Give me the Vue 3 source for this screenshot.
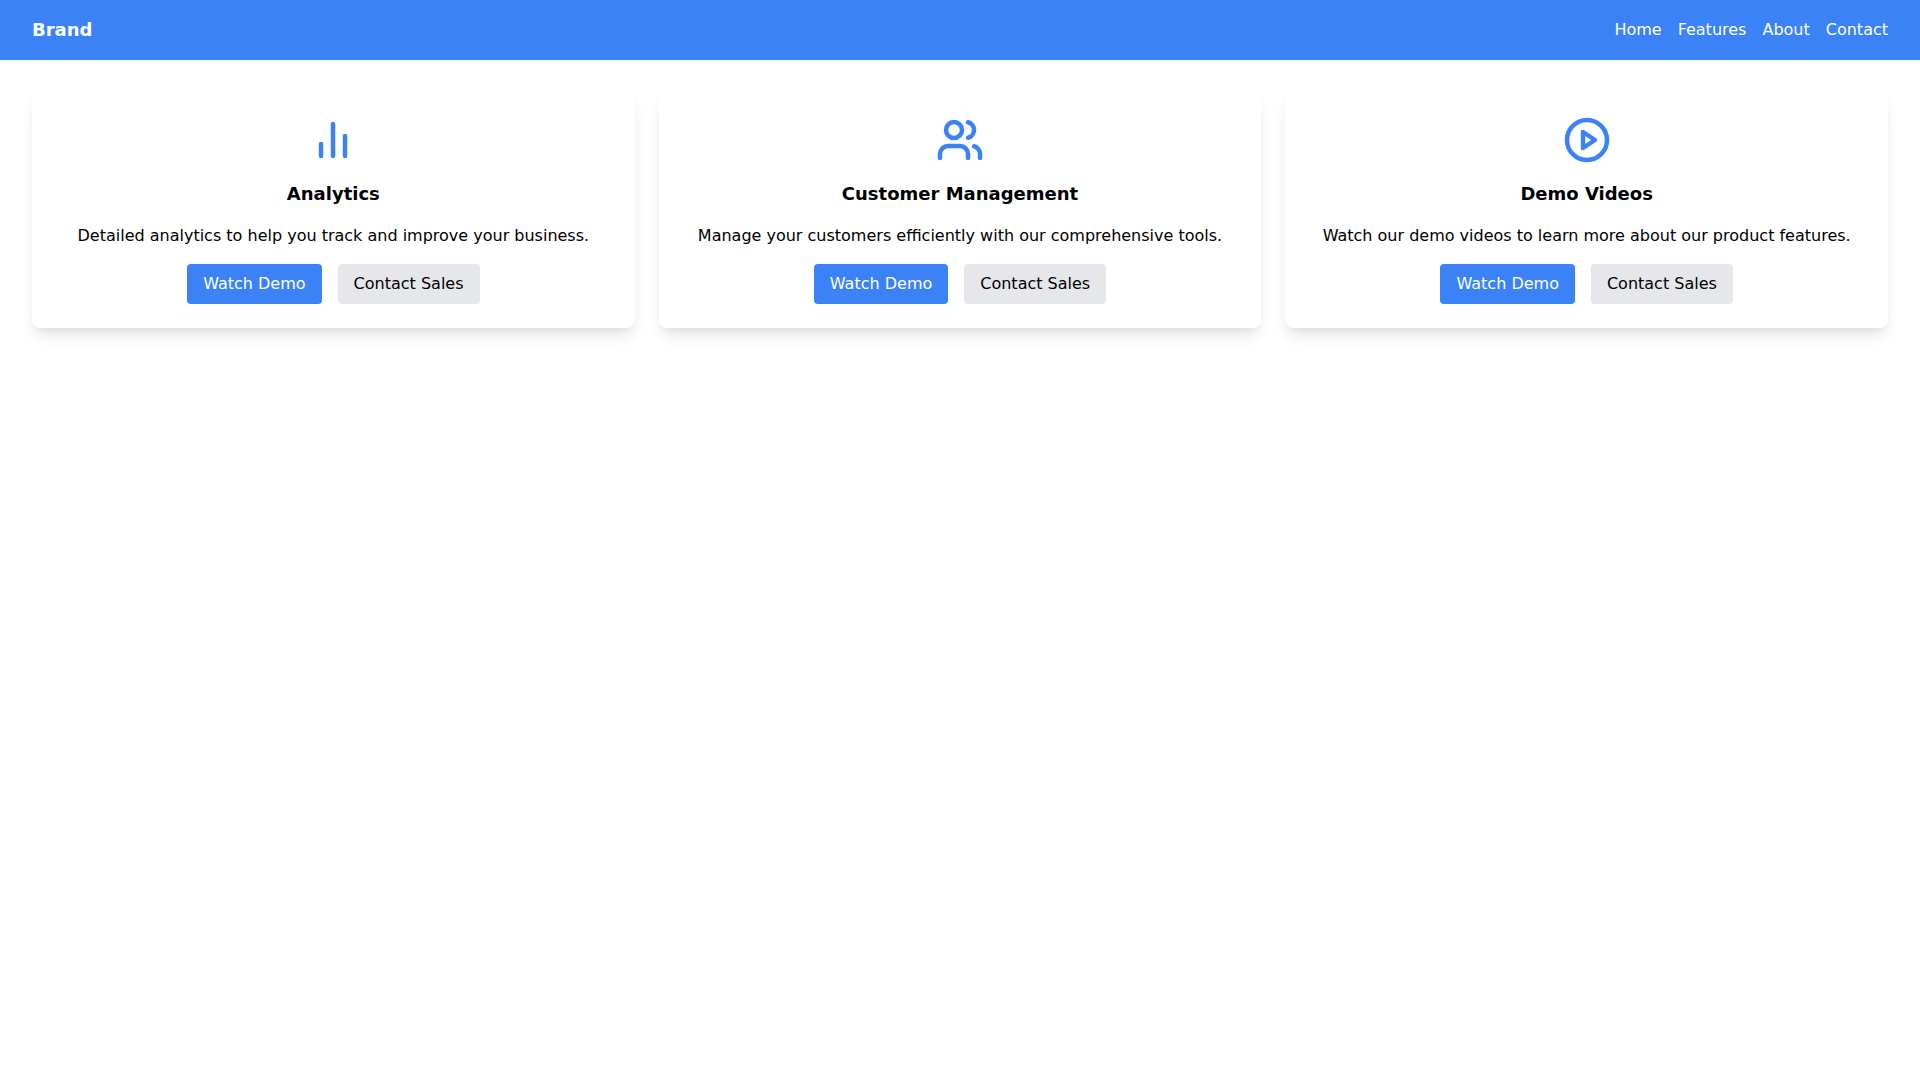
<script setup>
const cards = [
  { title: 'Analytics', text: 'Detailed analytics to help you track and improve your business.', icon: 'bars' },
  { title: 'Customer Management', text: 'Manage your customers efficiently with our comprehensive tools.', icon: 'users' },
  { title: 'Demo Videos', text: 'Watch our demo videos to learn more about our product features.', icon: 'play' }
]
const links = ['Home', 'Features', 'About', 'Contact']
</script>

<template>
  <div class="page">
    <header class="bar">
      <div class="brand">Brand</div>
      <nav class="nav">
        <a v-for="l in links" :key="l" class="link">{{ l }}</a>
      </nav>
    </header>
    <main class="grid">
      <section v-for="c in cards" :key="c.title" class="card">
        <svg class="icon" viewBox="0 0 24 24" fill="none" stroke="currentColor" stroke-width="2.25" stroke-linecap="round" stroke-linejoin="round">
          <template v-if="c.icon === 'bars'">
            <line x1="18" y1="20" x2="18" y2="10" />
            <line x1="12" y1="20" x2="12" y2="4" />
            <line x1="6" y1="20" x2="6" y2="14" />
          </template>
          <template v-else-if="c.icon === 'users'">
            <path d="M16 21v-2a4 4 0 0 0-4-4H6a4 4 0 0 0-4 4v2" />
            <circle cx="9" cy="7" r="4" />
            <path d="M22 21v-2a4 4 0 0 0-3-3.87" />
            <path d="M16 3.13a4 4 0 0 1 0 7.75" />
          </template>
          <template v-else>
            <circle cx="12" cy="12" r="10" />
            <polygon points="10 8 16 12 10 16 10 8" />
          </template>
        </svg>
        <h3 class="title">{{ c.title }}</h3>
        <p class="text">{{ c.text }}</p>
        <div class="actions">
          <button class="btn primary">Watch Demo</button>
          <button class="btn secondary">Contact Sales</button>
        </div>
      </section>
    </main>
  </div>
</template>

<style>
html, body { margin: 0; background: #fff; }
</style>

<style scoped>
.page { font-family: "DejaVu Sans", sans-serif; font-size: 16px; line-height: 24px; color: #000; min-height: 1080px; background: #fff; }
.bar { height: 60px; box-sizing: border-box; padding: 0 32px; background: #3b82f6; color: #fff; display: flex; align-items: center; justify-content: space-between; }
.brand { font-size: 18px; font-weight: 700; line-height: 28px; }
.nav { display: flex; gap: 16px; }
.link { color: #fff; }
.grid { display: grid; grid-template-columns: repeat(3, 1fr); gap: 24px; padding: 32px; }
.card { background: #fff; border-radius: 8px; padding: 24px; display: flex; flex-direction: column; align-items: center; text-align: center; box-shadow: 0 10px 15px -3px rgba(0,0,0,.1), 0 4px 6px -2px rgba(0,0,0,.05); }
.icon { width: 48px; height: 48px; color: #3b82f6; display: block; }
.title { margin: 16px 0; font-size: 18px; line-height: 28px; font-weight: 700; }
.text { margin: 0 0 16px; }
.actions { display: flex; gap: 16px; }
.btn { border: 0; border-radius: 4px; padding: 8px 16px; font: inherit; cursor: pointer; }
.primary { background: #3b82f6; color: #fff; }
.secondary { background: #e5e7eb; color: #000; }
</style>
